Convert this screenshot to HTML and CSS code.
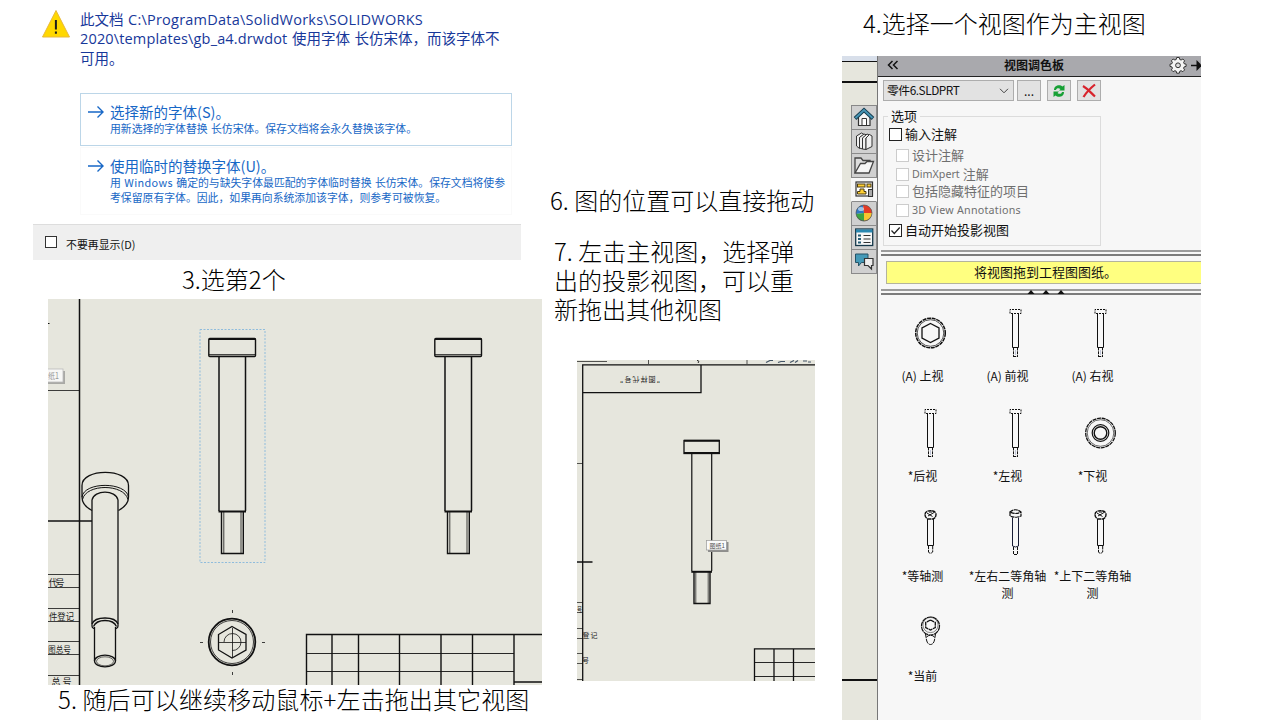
FILE: index.html
```html
<!DOCTYPE html>
<html lang="zh-CN">
<head>
<meta charset="utf-8">
<title>工程图视图</title>
<link rel="stylesheet" href="styles.css">
</head>
<body>
<main class="slide">
  <section class="col-left">
    <div class="dialog">
      <div class="dialog-head">
        <svg class="warn" viewBox="0 0 30 30"><path d="M15 1.5 L28.5 28 H1.5 Z" fill="#ffd800" stroke="#e8b93c" stroke-width="1" stroke-linejoin="round"/><path d="M14.9 11 V20.5 M14.9 22.6 V24.8" stroke="#1c1c1c" stroke-width="2"/></svg>
        <div class="dialog-title">
          <div>此文档 <span class="lat">C:\ProgramData\SolidWorks\SOLIDWORKS</span></div>
          <div><span class="lat lat2">2020\templates\gb_a4.drwdot</span> 使用字体 长仿宋体，而该字体不</div>
          <div>可用。</div>
        </div>
      </div>
      <div class="option option-on">
        <svg class="arrow" viewBox="0 0 16 14"><path d="M0 7 H15 M9.5 1.5 L15 7 L9.5 12.5" fill="none" stroke="#1767c6" stroke-width="1.4"/></svg>
        <div class="option-body">
          <div class="option-title">选择新的字体(S)。</div>
          <div class="option-sub">用新选择的字体替换 长仿宋体。保存文档将会永久替换该字体。</div>
        </div>
      </div>
      <div class="option option-two">
        <svg class="arrow" viewBox="0 0 16 14"><path d="M0 7 H15 M9.5 1.5 L15 7 L9.5 12.5" fill="none" stroke="#1767c6" stroke-width="1.4"/></svg>
        <div class="option-body">
          <div class="option-title">使用临时的替换字体(U)。</div>
          <div class="option-sub">用 <span class="win">Windows</span> 确定的与缺失字体最匹配的字体临时替换 长仿宋体。保存文档将使参</div>
          <div class="option-sub">考保留原有字体。因此，如果再向系统添加该字体，则参考可被恢复。</div>
        </div>
      </div>
      <div class="dialog-foot"><span class="box"></span><span>不要再显示(D)</span></div>
    </div>
    <p class="note note3">3.选第2个</p>
    <svg class="sheet-a" viewBox="48 299 494 386">
      <rect x="48" y="299" width="494" height="386" fill="#e6e6dd"/>
      <g fill="none" stroke="#111">
        <path d="M79.5 299 V685" stroke-width="1.5"/>
        <path d="M48 390.5 H79 M48 574.5 H79 M48 587.5 H79 M48 608.5 H79 M48 621.5 H79 M48 641.5 H79 M48 654.5 H79 M48 675.5 H79" stroke-width=".8"/>
        <path d="M48 521 H92" stroke-width="1.4"/>
        <path d="M48 323.5 h1.500" stroke-width="1"/>
      </g>
      <rect x="40" y="371" width="25" height="13" fill="#a9a9a5"/>
      <rect x="40" y="369" width="23" height="13" fill="#f7f7f5" stroke="#bbb" stroke-width=".8"/>
      <text x="48" y="379" class="tip pale" textLength="11" lengthAdjust="spacingAndGlyphs">纸1</text>
      <g class="stamp"><text x="48.500" y="586" textLength="16">代号</text><text x="49" y="620" textLength="25" lengthAdjust="spacingAndGlyphs">件登记</text><text x="48" y="653" textLength="23" lengthAdjust="spacingAndGlyphs">图总号</text><text x="51.500" y="685" textLength="20">总号</text></g>
      <rect x="200" y="329.500" width="65" height="233" fill="none" stroke="#8fbcdc" stroke-width="1" stroke-dasharray="2 1.500"/>
      <g id="bolt" fill="none" stroke="#111">
        <rect x="208.800" y="338.500" width="46.700" height="18" rx="1" stroke-width="1.4"/>
        <path d="M209 339 H255.500" stroke-width="2.200"/>
        <path d="M209 354.700 H255.500" stroke-width="1.100"/>
        <path d="M219 357 V511 M245.500 357 V511" stroke-width="1.5"/>
        <path d="M218.500 511.500 H246" stroke-width="2"/>
        <path d="M221.500 512 V553.500 H243.300 V512" stroke-width="1.4"/>
        <path d="M223.800 512 V553 M241 512 V553" stroke-width=".8"/>
      </g>
      <use href="#bolt" x="226"/>
      <g fill="none" stroke="#111" stroke-width="1.300">
        <path d="M92 510.500 C85 507 82 503 82 497 V485.500 C82 468 128.500 468 128.500 485.500 V497 C128.500 503 125 507 118.500 510.500"/>
        <path d="M82 497 C84 481.500 126 481.500 128.500 497 M82.500 499.500 C86 483.500 124 483.500 128 499.500" stroke-width="1"/>
        <path d="M92 624 V500 C94 489.500 116 489.500 118 500 V624"/>
        <path d="M92 624 V626 C92 628 94 628.500 94.500 628.500 M118 624 V626 C118 628 116 628.500 115.500 628.500 M92 624 C95 616 115 616 118 624 M93.500 626.500 C97 618.500 113 618.500 116.500 626.500"/>
        <path d="M94.500 627 V661 M115.500 627 V661"/>
        <ellipse cx="105" cy="661" rx="10.500" ry="5.800"/>
        <ellipse cx="105" cy="661.300" rx="8.500" ry="4.500" stroke-width=".6"/>
      </g>
      <g fill="none" stroke="#111">
        <circle cx="232" cy="642" r="23.300" stroke-width="1.800"/>
        <circle cx="232" cy="642" r="21.500" stroke-width=".8"/>
        <path d="M232 626.500 L246 634.500 V650 L232 658 L218.500 650 V634.500 Z" stroke-width="1.300"/>
        <path d="M224 642 A8.500 8.500 0 1 1 232 650.500" stroke-width=".8"/>
        <path d="M219 642.500 H246 M232.500 628 V657 M200 642.500 h3 M262 642.500 h3 M232.500 610 v3 M232.500 672 v3" stroke-width=".8"/>
        <path d="M306.500 685 V634.500 H542 M332 634 V685 M358.500 634 V685 M399.500 634 V685 M441 634 V685 M472.500 634 V685 M514 634 V685 M514 682 H542" stroke-width="1.400"/>
        <path d="M306 653.500 H514 M306 671.500 H514" stroke-width=".9"/>
      </g>
    </svg>
    <p class="note note5">5. 随后可以继续移动鼠标+左击拖出其它视图</p>
  </section>

  <section class="col-mid">
    <p class="note">6. 图的位置可以直接拖动</p>
    <div class="note note7"><div>7. 左击主视图，选择弹</div><div>出的投影视图，可以重</div><div>新拖出其他视图</div></div>
    <svg class="sheet-b" viewBox="577 360 238 321">
      <rect x="577" y="360" width="238" height="321" fill="#e6e6dd"/>
      <g fill="none" stroke="#111">
        <path d="M582.700 681 V364.800 H815 M583 392.700 H701 V365 M577 562 H592.500" stroke-width="1.300"/>
        <path d="M577 361.500 H607 M648.500 360 V364 M747 360 V364 M577 463.500 H583 M577 602.500 H583 M577 612.500 H583 M577 628.500 H583 M577 638.500 H583 M577 653.500 H583 M577 663.500 H583 M577 679.500 H583" stroke-width=".7"/>
        <path d="M697 360.500 q3 0 1 2.500" stroke-width=".9"/>
        <path d="M766 362.500 l4 -2 h3 M778 362.500 l3 -1 h4 M790 362.500 l4 -2 m1 2 l3 -2 M803 361 h4 m1 1 h3" stroke="#456" stroke-width="1.200"/>
        <rect x="684" y="440.500" width="35.300" height="13" stroke-width="1.300"/>
        <path d="M684 440.700 H719.500 M684 453 H719.500" stroke-width="2"/>
        <path d="M691.800 454 V571 M711.700 454 V571" stroke-width="1.200"/>
        <path d="M691.300 571.800 H712" stroke-width="2"/>
        <path d="M694 572 V603.500 H710 V572" stroke-width="1.400"/>
        <path d="M695.800 572 V603 M708.200 572 V603" stroke-width=".7"/>
        <path d="M754.500 681 V648.800 H815 M774 649 V681 M793.500 649 V681" stroke-width="1.300"/>
        <path d="M754 662.500 H815 M754 676.500 H815" stroke-width=".9"/>
      </g>
      <g class="stamp small"><text transform="rotate(180 640 379)" x="620" y="381.500" textLength="40">"图样代号"</text><text x="577" y="611.500" textLength="5" lengthAdjust="spacingAndGlyphs">号</text><text x="582.500" y="637.500" textLength="15">登记</text><text x="582" y="662.500">号</text></g>
      <rect x="708" y="542" width="20.500" height="10" fill="#8e8e8c"/>
      <rect x="706.500" y="540.500" width="20" height="9.500" fill="#fafafa" stroke="#999" stroke-width=".7"/>
      <text x="709.500" y="547.500" class="tip">图纸1</text>
    </svg>
  </section>

  <section class="col-right">
    <p class="note">4.选择一个视图作为主视图</p>
    <div class="app">
      <div class="rail">
        <div class="rail-top"></div>
        <div class="rail-band"></div>
        <div class="tabs">
          <div class="tab"><svg viewBox="0 0 24 22"><path d="M6.500 10 V19.500 H18 V10 L12 5 Z" fill="#f6f6f6" stroke="#333" stroke-width="1.200"/><path d="M3 12.500 L12 4 L21 12.500" fill="none" stroke="#163d50" stroke-width="3.800"/><path d="M3.500 12 L12 4 L20.500 12" fill="none" stroke="#4795b5" stroke-width="1.800"/><path d="M10 19 V12.500 H14.500 V19" fill="#fff" stroke="#333"/></svg></div>
          <div class="tab"><svg viewBox="0 0 24 22"><g fill="#f0f0f0" stroke="#333" stroke-width="1" stroke-linejoin="round"><path d="M4.500 6 L9.500 3 L12 4.500 L7.500 7.500 V18.500 L4.500 16 Z"/><path d="M7.500 7.500 L12 4 L15 5 L10.500 8 V19 L7.500 18 Z"/><path d="M10.500 8 L15 4 L17.500 5 L14 8 V19.500 L10.500 19 Z"/><path d="M14 8 L17.500 4.500 L20 6 V16.500 L14 19.500 Z"/></g></svg></div>
          <div class="tab"><svg viewBox="0 0 24 22"><path d="M3 19 V4 H9 L11 6.500 H18 V10" fill="#ddd" stroke="#444" stroke-width="1.300"/><path d="M3 19 L8.500 9.500 H13 L15 7.500 H21.500 L17 19 Z" fill="#f5f5f5" stroke="#444" stroke-width="1.300"/></svg></div>
          <div class="tab tab-on"><svg viewBox="0 0 24 22"><rect x="4" y="4" width="16.500" height="14" fill="#fff" stroke="#333" stroke-width="1.200"/><g fill="#ffd034" stroke="#4a3b12" stroke-width="1"><rect x="5.500" y="6" width="7.500" height="3"/><rect x="15" y="6" width="4" height="3"/><path d="M8 11 H12 V13.500 H14 V16 H5.500 V13.500 H8 Z"/></g><rect x="16.500" y="11.500" width="4" height="7" fill="#aaa" stroke="#333"/></svg></div>
          <div class="tab"><svg viewBox="0 0 24 22"><path d="M12 11 L11 3 A8 8 0 0 0 4 12 Z" fill="#2f78c4"/><path d="M12 11 L11 3 A8 8 0 0 1 20 11 Z" fill="#e23a26"/><path d="M12 11 L4 12 A8 8 0 0 0 12 19 Z" fill="#3ba442"/><path d="M12 11 H20 A8 8 0 0 1 12 19 Z" fill="#f6c530"/><path d="M4.500 14 A8 8 0 0 0 19.500 14 Q12 23 4.500 14 Z" fill="#222" opacity=".35"/><circle cx="12" cy="11" r="8" fill="none" stroke="#555" stroke-width=".7"/><ellipse cx="9" cy="7" rx="3" ry="2" fill="#fff" opacity=".55"/></svg></div>
          <div class="tab"><svg viewBox="0 0 24 22"><rect x="3.700" y="3" width="17" height="16.500" fill="#f7f7f7" stroke="#17394a" stroke-width="1.300"/><path d="M4 5 H20.500" stroke="#2987b0" stroke-width="3"/><path d="M6 9.500 h3 M6 13 h3 M6 16.500 h3" stroke="#245c75" stroke-width="2.200"/><path d="M11.500 9.500 h7 M11.500 13 h7 M11.500 16.500 h7" stroke="#333" stroke-width="1.200"/></svg></div>
          <div class="tab"><svg viewBox="0 0 24 22"><path d="M3.500 4 H16 V12.500 H9.500 L6.500 16 V12.500 H3.500 Z" fill="#4499b7" stroke="#245266"/><path d="M12.500 8.500 H21 V15.500 H19.500 V19 L16 15.500 H12.500 Z" fill="#eee" stroke="#333" stroke-width="1.200"/></svg></div>
        </div>
        <div class="rail-line"></div>
      </div>
      <div class="panel">
        <div class="panel-head">
          <svg class="chev" viewBox="0 0 12 10"><path d="M5.500 1 L1.500 5 L5.500 9 M10.500 1 L6.500 5 L10.500 9" fill="none" stroke="#111" stroke-width="1.500"/></svg>
          <span class="panel-title">视图调色板</span>
          <svg class="gear" viewBox="0 0 32 18"><path d="M7.700 1.500 h2.600 l.5 2 1.300 .5 1.800 -1 1.700 1.800 -1 1.700 .5 1.200 2 .5 v2.200 l-2 .5 -.5 1.300 1 1.700 -1.700 1.800 -1.800 -1 -1.300 .5 -.5 2 h-2.600 l-.5 -2 -1.300 -.5 -1.800 1 -1.700 -1.800 1 -1.700 -.5 -1.300 -1.900 -.5 v-2.200 l1.900 -.5 .5 -1.200 -1 -1.700 1.700 -1.800 1.800 1 1.300 -.5 Z" fill="#f4f4f4" stroke="#333" stroke-width="1"/><circle cx="9" cy="9.300" r="2.400" fill="#ddd" stroke="#333"/><path d="M22 9.500 H28" stroke="#111" stroke-width="1.500"/><path d="M27.500 4 L33 9.500 L27.500 15 Z" fill="#111"/></svg>
        </div>
        <div class="tools">
          <div class="combo"><span>零件6.SLDPRT</span><svg viewBox="0 0 10 6"><path d="M1 .8 L5 4.800 L9 .8" fill="none" stroke="#444"/></svg></div>
          <div class="btn">...</div>
          <div class="btn"><svg viewBox="0 0 14 16"><path d="M2 7 C2 2 8 1 10.500 3.500 L12.500 2 V7.500 H7 L8.500 6 C6.500 4.500 4.500 5 4 7 Z M12 9 C12 14 6 15 3.500 12.500 L1.500 14 V8.500 H7 L5.500 10 C7.500 11.500 9.500 11 10 9 Z" fill="#17a035"/></svg></div>
          <div class="btn"><svg viewBox="0 0 14 16"><path d="M1 3 C6 6 9 10 13 13.500 M13 1.500 C8 5.500 4.500 9 1.500 14" fill="none" stroke="#d8232c" stroke-width="2.200"/></svg></div>
        </div>
        <div class="group">
          <div class="legend"><span>选项</span></div>
          <div class="check r1"><span class="box"></span><span class="lbl">输入注解</span></div>
          <div class="check sub r2"><span class="box"></span><span class="lbl">设计注解</span></div>
          <div class="check sub r3"><span class="box"></span><span class="en">DimXpert</span><span class="lbl">注解</span></div>
          <div class="check sub r4"><span class="box"></span><span class="lbl">包括隐藏特征的项目</span></div>
          <div class="check sub r5"><span class="box"></span><span class="en en-long">3D View Annotations</span></div>
          <div class="check r6"><span class="box"><svg viewBox="0 0 11 11"><path d="M1.500 5.500 L4.300 8.500 L9.700 2.500" fill="none" stroke="#222" stroke-width="1.200"/></svg></span><span class="lbl">自动开始投影视图</span></div>
        </div>
        <div class="split"></div>
        <div class="hint">将视图拖到工程图图纸。</div>
        <div class="split split2"><svg viewBox="0 0 36 4"><path d="M-.5 4 L3 0 L6.500 4 Z M14.500 4 L18 0 L21.500 4 Z M29.500 4 L33 0 L36.500 4 Z" fill="#111"/></svg></div>
        <div class="views">
          <div class="view"><svg viewBox="0 0 48 48"><g fill="none" stroke="#111"><circle cx="24.500" cy="24" r="14.800" stroke-width="1.500" stroke-dasharray="4 .7"/><circle cx="24.500" cy="24" r="13.300" stroke-width=".7"/><path d="M24.500 14.500 L33 19 V29 L24.500 33.500 L16 29 V19 Z" stroke-width="1.300"/></g></svg><span>(A) 上视</span></div>
          <div class="view"><svg viewBox="0 0 48 48"><g id="mini" fill="none" stroke="#111"><path d="M19 4.500 V.5 H30 V4.500 Z" stroke-dasharray="2 1"/><path d="M21.500 4.500 V38.500 H27.500 V4.500"/><path d="M22.500 38.500 V47.500 M26.500 38.500 V47.500 M22 47.500 h5" stroke-dasharray="3 .8"/><path d="M24.500 41 V46" stroke="#9aa4c4" stroke-width=".6"/></g></svg><span>(A) 前视</span></div>
          <div class="view"><svg viewBox="0 0 48 48"><use href="#mini"/></svg><span>(A) 右视</span></div>
          <div class="view"><svg viewBox="0 0 48 48"><use href="#mini"/></svg><span>*后视</span></div>
          <div class="view"><svg viewBox="0 0 48 48"><use href="#mini"/></svg><span>*左视</span></div>
          <div class="view"><svg viewBox="0 0 48 48"><g fill="none" stroke="#111"><circle cx="24.500" cy="24" r="14.800" stroke-width="1.300" stroke-dasharray="4 .7"/><circle cx="24.500" cy="24" r="13.300" stroke-width=".6"/><circle cx="24.500" cy="24" r="8.300" stroke-width="1.200"/><circle cx="24.500" cy="24" r="6.300" stroke-width="1.400"/></g></svg><span>*下视</span></div>
          <div class="view"><svg viewBox="0 0 48 48"><g id="iso" fill="none" stroke="#111"><path d="M19 5.500 C19 .300 30 .300 30 5.500 C30 8 28.500 9.500 27 10 H22 C20.500 9.500 19 8 19 5.500 Z" stroke-width="1.400" stroke-dasharray="4 .5"/><path d="M21 4 L26.500 7.500 M28 3.500 L22 7 M23 3 H26"/><path d="M21.500 10 V36.500 H27.500 V10"/><path d="M22.500 36 V43 Q24 45.500 26.700 43 V36" stroke-dasharray="4 .8"/></g></svg><span>*等轴测</span></div>
          <div class="view"><svg viewBox="0 0 48 48"><g fill="none" stroke="#111"><path d="M19 3 V7 Q24.500 9.500 30 7 V3 Q24.500 -1.500 19 3 Q24.500 6 30 3" stroke-width="1.200" stroke-dasharray="4 .6"/><path d="M21.500 8.500 V37 Q24.500 39 27.500 37 V8.500" stroke="#181d35"/><path d="M22.500 38 V45.500 H26.500 V38" stroke-dasharray="3 1"/></g></svg><span>*左右二等角轴<br>测</span></div>
          <div class="view"><svg viewBox="0 0 48 48"><use href="#iso"/></svg><span>*上下二等角轴<br>测</span></div>
          <div class="view"><svg viewBox="0 0 48 48"><g fill="none" stroke="#111"><circle cx="24.500" cy="17" r="9" stroke-width="1.200" stroke-dasharray="5 .5"/><circle cx="24.500" cy="16" r="7.600" stroke-width=".5"/><path d="M24.500 11 L29.300 13.500 V18.500 L24.500 21 L19.700 18.500 V13.500 Z" stroke-width="1.300" stroke-dasharray="4 .6"/><path d="M19.500 25 L20.500 31 M29.500 25 L28.500 31 M20.500 31 Q21.500 35.500 24.500 35.500 Q27.500 35.500 28.500 31 M20.500 28 Q24.500 24.500 28.500 28" stroke-dasharray="4 .8"/></g></svg><span>*当前</span></div>
        </div>
      </div>
    </div>
  </section>
</main>
</body>
</html>
```
FILE: styles.css
```css
* { box-sizing: border-box; }
body { margin: 0; background: #fff; font-family: "Noto Sans CJK SC", sans-serif; }
svg { display: block; flex: none; }
.slide { width: 1280px; height: 720px; overflow: hidden; display: flex; white-space: nowrap; }

.note { margin: 0; font-size: 24px; line-height: 29px; font-weight: 300; color: #000; }

/* left column */
.col-left { width: 542px; padding-left: 33px; flex: none; }
.dialog { width: 488px; height: 260px; display: flex; flex-direction: column; }
.dialog > * { flex: none; }
.dialog-head { display: flex; height: 93px; padding: 9px 0 0 8px; }
.warn { width: 30px; height: 30px; }
.dialog-title { margin-left: 9px; font-size: 14.5px; line-height: 19px; word-spacing: 1.3px; color: #17389a; }
.dialog-title div { height: 19.3px; }
.lat { font-family: "Open Sans", sans-serif; line-height: 1; letter-spacing: .23px; }
.lat2 { letter-spacing: .15px; }
.option { display: flex; width: 432px; margin-left: 47px; padding: 8px 0 0 7px; border: 1px solid #fafafa; color: #1767c6; }
.option-on { height: 53px; border-color: #bcd6e8; }
.option-two { height: 68px; margin-top: 1px; }
.arrow { width: 16px; height: 14px; margin-top: 3px; }
.option-body { margin-left: 6px; }
.option-title { font-size: 14.5px; line-height: 19px; }
.option-sub { font-size: 10.85px; line-height: 15.3px; word-spacing: 1px; }
.win { letter-spacing: .35px; }
.dialog-foot { margin-top: 9px; height: 36px; background: #efefef; border-top: 1px solid #ddd; display: flex; align-items: center; padding: 2px 0 0 12px; font-size: 10.9px; color: #111; }
.dialog-foot .box { width: 12px; height: 12px; margin: -3px 9px 0 0; border: 1px solid #333; background: #fff; }
.note3 { padding: 4px 0 0 149px; }
.sheet-a { width: 494px; height: 386px; margin: 6px 0 0 15px; }
.note5 { padding-left: 25px; margin-top: -1px; letter-spacing: .11px; }

.stamp text { font-family: "Noto Sans CJK SC", sans-serif; font-size: 9px; fill: #222; }
.stamp.small text { font-size: 7px; }
.tip { font-family: "Noto Sans CJK SC", sans-serif; font-size: 6px; fill: #555; }
.tip.pale { font-size: 8.5px; fill: #999; }

/* middle column */
.col-mid { width: 273px; padding: 185px 0 0 8px; flex: none; }
.note7 { margin: 22px 0 0 4px; }
.sheet-b { width: 238px; height: 321px; margin: 37px 0 0 27px; }

/* right column */
.col-right { width: 386px; padding-left: 27px; flex: none; }
.col-right > .note { padding-left: 21px; height: 56px; padding-top: 8px; }
.app { display: flex; width: 359px; height: 664px; overflow: hidden; }
.rail { width: 36px; background: #e6e6dd; border-right: 1px solid #777; display: flex; flex-direction: column; flex: none; }
.rail-top { height: 6px; background: #d8dfea; border-bottom: 1px solid #111; }
.rail-band { height: 21px; border-bottom: 2px solid #111; }
.tabs { margin: 22px 0 0 9px; border-top: 1px solid #888; }
.tab { height: 24px; width: 26px; background: #d0d0d0; border: 1px solid #8a8a8a; border-top: 0; }
.tab svg { width: 24px; height: 22px; }
.tab-on { background: #f7f7f7; border-color: #f7f7f7; border-bottom-color: #8a8a8a; }
.rail-line { margin-top: 405px; height: 2px; background: #111; }

.panel { flex: 1; background: #f7f7f7; }
.panel-head { height: 21px; background: #a9a9ad; border-bottom: 1px solid #222; display: flex; align-items: center; }
.chev { width: 12px; height: 10px; margin-left: 9px; margin-top: -2px; }
.panel-title { margin-left: 105px; margin-top: -3px; font-size: 12px; font-weight: 700; line-height: 20px; color: #111; }
.gear { width: 32px; height: 18px; margin: -2px 0 0 105px; }
.tools { display: flex; padding: 3px 0 0 5px; }
.combo, .btn { height: 21px; border: 1px solid #adadad; background: #e2e2e2; font-size: 12px; color: #111; display: flex; align-items: center; }
.combo { width: 131px; padding: 0 4px 0 3px; justify-content: space-between; margin-right: 3px; font-size: 11.8px; letter-spacing: -.45px; line-height: 17px; }
.combo span { margin-top: -2px; }
.combo svg { width: 10px; height: 6px; }
.btn { width: 24px; margin-right: 6px; justify-content: center; }
.btn svg { width: 14px; height: 16px; }

.group { width: 218px; height: 130px; margin: 15px 0 0 5px; border: 1px solid #dcdcdc; font-size: 13px; color: #111; }
.legend { height: 10px; margin-top: -10px; line-height: 18px; }
.legend span { display: inline-block; height: 18px; margin-left: 4px; padding: 0 3px; background: #f7f7f7; }
.check { display: flex; align-items: center; padding-left: 5px; }
.check .box { width: 13px; height: 13px; border: 1px solid #222; background: #fff; margin-right: 3px; flex: none; }
.check .box svg { width: 11px; height: 11px; }
.lbl { margin-top: -2px; }
.check.sub { padding-left: 12px; color: #6f6f6f; }
.sub .box { border-color: #ccc; }
.en { font-family: "Noto Sans", sans-serif; font-size: 10.7px; margin-right: 3px; }
.en-long { letter-spacing: .26px; }
.r1 { height: 22px; margin-top: 6px; }
.r2 { height: 20px; }
.r3 { height: 18px; }
.r4 { height: 17px; }
.r5 { height: 20px; }
.r6 { height: 20px; }

.split { margin: 4px 0 0 3px; height: 6px; border-top: 2px solid #9b9b9b; border-bottom: 2px solid #7c7c7c; }
.hint { margin: 5px 0 0 8px; height: 23px; padding-left: 87px; background: #ffff80; border: 1px solid #b4b49c; border-right: 0; font-size: 13px; line-height: 19px; color: #111; }
.split2 { margin-top: 5px; padding-left: 147px; }
.split2 svg { width: 36px; height: 4px; margin-top: -1px; overflow: visible; }

.views { display: grid; grid-template-columns: repeat(3, 85px); grid-auto-rows: 100px; padding: 14px 0 0 3px; }
.view { font-size: 12px; line-height: 17px; text-align: center; color: #111; }
.view svg { width: 48px; height: 48px; margin: 0 0 10px 25px; }
.view span { display: block; margin-left: -2px; }
```
